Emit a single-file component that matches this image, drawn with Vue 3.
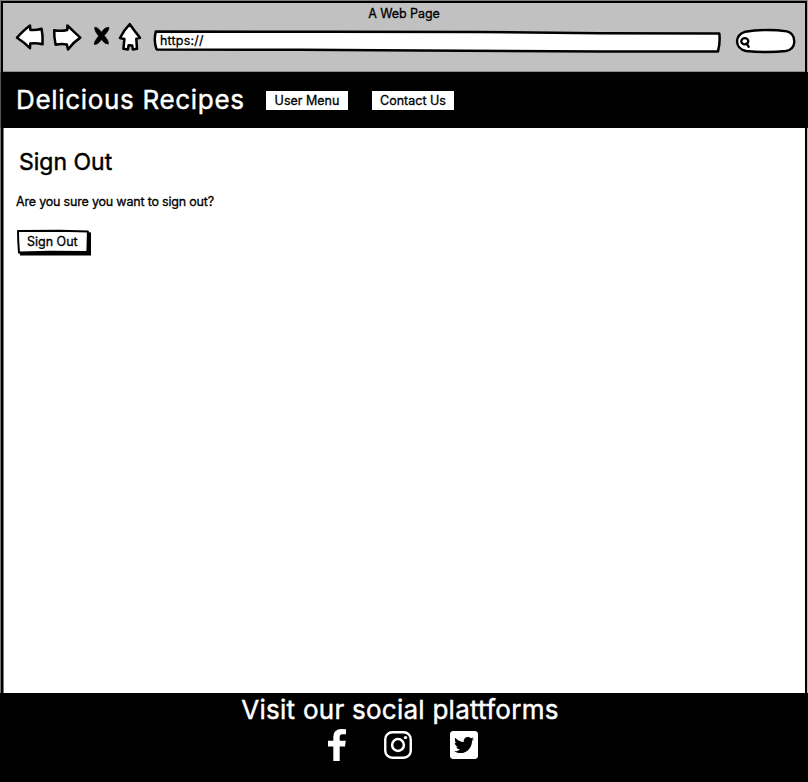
<script setup>
const links = ['User Menu', 'Contact Us']
</script>

<template>
  <div class="window">
    <header class="chrome">
      <div class="title"><span>A Web Page</span></div>
      <div class="tools">
        <svg class="nav" viewBox="14 20 130 34" width="130" height="34">
          <g fill="#fff" stroke="#000" stroke-width="2.5" stroke-linejoin="round">
            <path d="M17 37.7Q24 30 30 25.6L30.4 30Q36 30.5 41.6 28.8Q43 36 42.6 44.2Q36 42.8 30.3 43.6L30 48.2Q24 42 17 37.7Z" />
            <path d="M54.2 30.2Q61 31.6 67.3 30L67.4 25.4Q74 32 80.3 37.6Q73 42.5 68 49.4L66.8 44.4Q61 43.4 55.6 44.8Q54 37 54.2 30.2Z" />
            <path d="M129.8 24.2Q134.5 31 140 37.7L136.3 38.6L137 48.8L132.8 49.4L132.2 45.4L128.6 45.2L128 49.4L123.4 48.8L124.4 39L120 38Q124 30 129.8 24.2Z" />
          </g>
          <path d="M94.8 27.2Q97.6 26.8 101.4 32.2Q104.8 27 108.8 27.4Q109.8 29.4 104.2 35.6Q109 41 108.3 44.1Q105 44.4 101.5 39.6Q97 45.6 94.2 44.2Q94 42 98.6 36Q94 30 94.8 27.2Z" stroke="#000" stroke-width="0.7" stroke-linejoin="round" />
        </svg>
        <div class="url">
          <svg viewBox="153 28 569 25" width="569" height="25">
            <path d="M155.8 31.6L330 31.8L480 32L600 33.2L719.3 33.6Q720.4 42 718 51.4L600 51.4L420 50.6L300 49.8L156.6 49.4Q153.4 41 155.8 31.6Z" fill="#fff" stroke="#000" stroke-width="2.5" stroke-linejoin="round" />
          </svg>
          <span>https://</span>
        </div>
        <svg class="search" viewBox="734 27 64 28" width="64" height="28">
          <path d="M745 31.8Q767 28.4 787 31.4Q794.5 33.5 794.3 42Q793.8 49.5 786 51Q768 53 746 51Q737.5 49 737 41.5Q737.5 34 745 31.8Z" fill="#fff" stroke="#000" stroke-width="2.4" />
          <ellipse cx="744.8" cy="41.3" rx="3.5" ry="3.1" fill="none" stroke="#000" stroke-width="2.3" />
          <path d="M746.6 43.6L748.6 46.6" stroke="#000" stroke-width="2.5" stroke-linecap="round" />
        </svg>
      </div>
    </header>

    <nav class="bar">
      <span class="brand">Delicious Recipes</span>
      <a v-for="l in links" :key="l" class="link"><span>{{ l }}</span></a>
    </nav>

    <main class="page">
      <h1><span>Sign Out</span></h1>
      <p><span>Are you sure you want to sign out?</span></p>
      <button class="signout">
        <svg viewBox="16 228 76 28" width="76" height="28">
          <path d="M88 232L91 232.4L91 255.6L20 255.6L19.4 252Z" />
          <path d="M18 231L60 230.8L87.9 231.4L87.4 252L50 251.8L19 252.6Q18 241 18 231Z" fill="#fff" stroke="#000" stroke-width="2" stroke-linejoin="round" />
        </svg>
        <span>Sign Out</span>
      </button>
    </main>

    <footer class="footer">
      <h2>Visit our social plattforms</h2>
      <div class="social">
        <svg class="fb" viewBox="95 0 864 1664" width="18" height="32" preserveAspectRatio="none">
          <path d="M959 12v264h-157q-86 0-116 36t-30 108v189h293l-39 296h-254v759h-306v-759h-255v-296h255v-218q0-186 104-288.5t277-102.5q147 0 228 12z" />
        </svg>
        <svg class="ig" viewBox="0 0 28 28" width="28" height="28">
          <rect x="1.25" y="1.25" width="25.5" height="25.5" rx="7" fill="none" stroke="#fff" stroke-width="2.4" />
          <circle cx="14" cy="14" r="5.9" fill="none" stroke="#fff" stroke-width="2.5" />
          <circle cx="21.5" cy="6.6" r="1.7" />
        </svg>
        <svg class="tw" viewBox="0 32 448 448" width="28" height="28">
          <path d="M400 32H48C21.5 32 0 53.5 0 80v352c0 26.5 21.5 48 48 48h352c26.5 0 48-21.5 48-48V80c0-26.5-21.5-48-48-48zm-48.9 158.8c.2 2.8.2 5.7.2 8.5 0 86.7-66 186.6-186.6 186.6-37.2 0-71.7-10.8-100.7-29.4 5.3.6 10.4.8 15.8.8 30.7 0 58.9-10.4 81.4-28-28.8-.6-53-19.5-61.3-45.5 10.1 1.5 19.2 1.5 29.6-1.2-30-6.1-52.5-32.5-52.5-64.4v-.8c8.7 4.9 18.9 7.9 29.6 8.3a65.447 65.447 0 0 1-29.2-54.6c0-12.2 3.2-23.4 8.9-33.1 32.3 39.8 80.8 65.8 135.2 68.6-9.3-44.5 24-80.6 64-80.6 18.9 0 35.9 7.9 47.9 20.7 14.8-2.8 29-8.3 41.6-15.8-4.9 15.2-15.2 28-28.8 36.1 13.2-1.4 26-5.1 37.8-10.2-8.9 13.1-20.1 24.7-32.9 34z" />
        </svg>
      </div>
    </footer>
  </div>
</template>

<style>
body { margin: 0; background: #000; }
</style>

<style scoped>
.window {
  width: 808px;
  height: 782px;
  display: flex;
  flex-direction: column;
  overflow: hidden;
  font-family: Inter, "Liberation Sans", sans-serif;
  font-size: 12.5px;
  color: #000;
  -webkit-text-stroke: 0.3px currentColor;
}
.window span { white-space: nowrap; }
.chrome {
  box-sizing: border-box;
  height: 72px;
  background: #c1c1c1;
  border-top: 1px solid #7d807d;
  border-left: 1px solid #777;
  border-right: 1px solid #a5a5a5;
  box-shadow: inset 2px 2px 0 #000, inset -2px 0 0 #000, inset 0 -1px 0 #8d8f8f;
}
.title {
  height: 25px;
  line-height: 25px;
  text-align: center;
  letter-spacing: -0.08px;
}
.tools { display: flex; padding-left: 13px; margin-top: -6px; }
.nav { margin-right: 9px; }
.url { display: grid; align-items: center; height: 25px; margin-top: 8px; margin-right: 12px; }
.url svg, .url span { grid-area: 1 / 1; }
.url span { padding-left: 7px; letter-spacing: 0.2px; }
.search { margin-top: 7px; }
.bar {
  display: flex;
  align-items: center;
  height: 56px;
  box-sizing: border-box;
  padding-left: 15px;
  background: #000;
  color: #fff;
  border-left: 1px solid #555;
}
.brand {
  width: 250px;
  padding-bottom: 2px;
  font-size: 26px;
  letter-spacing: 0.68px;
}
.brand, h1, h2 { -webkit-text-stroke-width: 0.45px; }
.link {
  width: 82px;
  height: 19px;
  line-height: 19px;
  margin-right: 24px;
  text-align: center;
  background: #fff;
  color: #000;
}
.page {
  box-sizing: border-box;
  height: 565px;
  background: #fff;
  border-left: 1px solid #777;
  border-right: 1px solid #bbb;
  box-shadow: inset 2px 0 0 #000, inset 3px 0 0 #777, inset -2px 0 0 #000;
  padding: 18px 0 0 15px;
}
h1 {
  margin: 0 0 0 3px;
  font-size: 23px;
  font-weight: 400;
  line-height: 32px;
}
p { margin: 14px 0 0; line-height: 20px; letter-spacing: -0.19px; }
.signout {
  display: grid;
  width: 76px;
  height: 28px;
  margin-top: 16px;
  padding: 0;
  border: 0;
  background: none;
  font: inherit;
  color: inherit;
}
.signout svg, .signout span { grid-area: 1 / 1; }
.signout span { text-align: left; padding-left: 11px; line-height: 27px; }
.footer {
  height: 89px;
  background: #000;
  color: #fff;
}
h2 {
  margin: 0;
  padding-right: 8px;
  text-align: center;
  font-size: 26px;
  font-weight: 400;
  line-height: 34px;
  letter-spacing: 0.25px;
}
.social { display: flex; align-items: center; margin-top: 2px; padding-left: 328px; fill: #fff; }
.ig { margin-left: 38px; }
.tw { margin-left: 38px; }
</style>
